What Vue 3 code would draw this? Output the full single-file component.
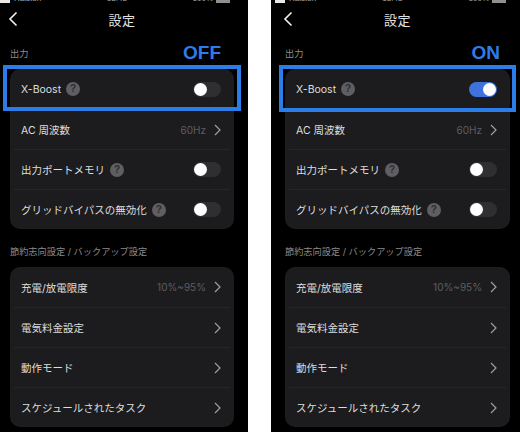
<script setup>
const phones = [
  { label: 'OFF', on: false },
  { label: 'ON', on: true },
]
</script>

<template>
  <div class="root">
    <section v-for="p in phones" :key="p.label" class="phone" :class="{ second: p.on }">
      <div class="status">
        <span class="carrier"><b class="bars"></b>Ralston</span>
        <span>18:48</span>
        <span class="battery">100%<b></b></span>
      </div>
      <header class="nav">
        <svg class="back" viewBox="0 0 10 16" width="10" height="16">
          <path d="M8.5 1.5 2 8l6.5 6.5" fill="none" stroke="#f2f2f2" stroke-width="1.6" />
        </svg>
        <h1>設定</h1>
      </header>
      <div class="label-row">
        <span class="section">出力</span>
        <span class="state">{{ p.label }}</span>
      </div>
      <div class="card">
        <div class="row boost">
          <span class="name">X-Boost</span><span class="help">?</span>
          <span class="toggle" :class="{ on: p.on }"><i></i></span>
        </div>
        <div class="row">
          <span class="name">AC 周波数</span>
          <span class="value">60Hz</span>
          <svg class="chev" viewBox="0 0 7 12" width="7" height="12"><path d="M1 1l5 5-5 5" /></svg>
        </div>
        <div class="row">
          <span class="name">出力ポートメモリ</span><span class="help">?</span>
          <span class="toggle"><i></i></span>
        </div>
        <div class="row">
          <span class="name">グリッドバイパスの無効化</span><span class="help">?</span>
          <span class="toggle"><i></i></span>
        </div>
      </div>
      <div class="section second-label">節約志向設定 / バックアップ設定</div>
      <div class="card">
        <div class="row">
          <span class="name">充電/放電限度</span>
          <span class="value">10%~95%</span>
          <svg class="chev" viewBox="0 0 7 12" width="7" height="12"><path d="M1 1l5 5-5 5" /></svg>
        </div>
        <div class="row">
          <span class="name">電気料金設定</span>
          <svg class="chev auto" viewBox="0 0 7 12" width="7" height="12"><path d="M1 1l5 5-5 5" /></svg>
        </div>
        <div class="row">
          <span class="name">動作モード</span>
          <svg class="chev auto" viewBox="0 0 7 12" width="7" height="12"><path d="M1 1l5 5-5 5" /></svg>
        </div>
        <div class="row">
          <span class="name">スケジュールされたタスク</span>
          <svg class="chev auto" viewBox="0 0 7 12" width="7" height="12"><path d="M1 1l5 5-5 5" /></svg>
        </div>
      </div>
      <div class="highlight"></div>
    </section>
  </div>
</template>

<style scoped>
.root {
  width: 520px;
  height: 432px;
  display: flex;
  gap: 23px;
  overflow: hidden;
  background: #fff;
  font-family: Inter, "Noto Sans CJK JP", sans-serif;
}
.phone {
  position: relative;
  width: 248px;
  height: 432px;
  flex: none;
  background: #000;
  padding: 0 14px 0 10px;
  box-sizing: border-box;
  overflow: hidden;
}
.phone.second {
  width: 249px;
  padding: 0 10px 0 14px;
}
.status {
  height: 3px;
  margin: -5px 0 0 -10px;
  padding: 0 4px 0 0;
  display: flex;
  justify-content: space-between;
  font: 8px/8px "Liberation Sans", sans-serif;
  color: #a8a8a8;
}
.carrier {
  display: flex;
  align-items: flex-end;
  height: 8px;
  gap: 4px;
}
.bars {
  width: 10px;
  height: 8px;
  background: #e8e8e8;
}
.battery {
  display: flex;
  align-items: flex-end;
  height: 8px;
  gap: 3px;
}
.battery b {
  width: 14px;
  height: 8px;
  background: #8f8f8f;
}
.nav {
  height: 31px;
  margin-top: 6px;
  display: flex;
  align-items: center;
  justify-content: center;
  position: relative;
}
.back {
  position: absolute;
  left: -2px;
  top: 7px;
}
h1 {
  margin: 0;
  font-size: 13px;
  font-weight: 400;
  color: #e4e4e4;
  letter-spacing: .5px;
}
.label-row {
  height: 34px;
  display: flex;
  justify-content: space-between;
  align-items: flex-end;
  padding-bottom: 9px;
  box-sizing: border-box;
}
.section {
  font-size: 9.2px;
  line-height: 12px;
  color: #8b8b8b;
}
.state {
  font: 700 19px/22px "Liberation Sans", sans-serif;
  color: #2f7bea;
  margin: 0 13px -4px 0;
}
.second .state {
  margin-right: 10px;
}
.card {
  background: #1c1c1e;
  border-radius: 10px;
}
.row {
  height: 40px;
  margin: 0 4px;
  padding: 0 7px;
  display: flex;
  align-items: center;
  box-sizing: border-box;
  border-top: 1px solid #262628;
}
.row:first-child {
  border-top: 0;
}
.name {
  font-size: 10.5px;
  color: #dedede;
  white-space: nowrap;
}
.help {
  width: 14px;
  height: 14px;
  margin-left: 5px;
  border-radius: 50%;
  background: #5f5f63;
  color: #2d2d30;
  font: 700 10px/14px "Liberation Sans", sans-serif;
  text-align: center;
  flex: none;
}
.toggle {
  width: 28px;
  height: 15px;
  margin-left: auto;
  margin-right: 2px;
  border-radius: 8px;
  background: #2f2f32;
  display: flex;
  align-items: center;
  padding: 0 1px;
  box-sizing: border-box;
}
.toggle i {
  width: 13px;
  height: 13px;
  border-radius: 50%;
  background: #fff;
}
.toggle.on {
  background: #3f72de;
  justify-content: flex-end;
}
.value {
  margin-left: auto;
  margin-right: 8px;
  font-size: 10px;
  color: #5e5e60;
}
.chev {
  flex: none;
  margin-right: 2px;
}
.chev.auto {
  margin-left: auto;
}
.chev path {
  fill: none;
  stroke: #a0a0a0;
  stroke-width: 1.2;
}
.second-label {
  height: 38px;
  padding-top: 17px;
  box-sizing: border-box;
}
.highlight {
  position: absolute;
  left: 3px;
  top: 65px;
  width: 238px;
  height: 46px;
  box-sizing: border-box;
  border: 4px solid #2b7de9;
}
.second .highlight {
  left: 8px;
  width: 237px;
  height: 47px;
}
</style>
